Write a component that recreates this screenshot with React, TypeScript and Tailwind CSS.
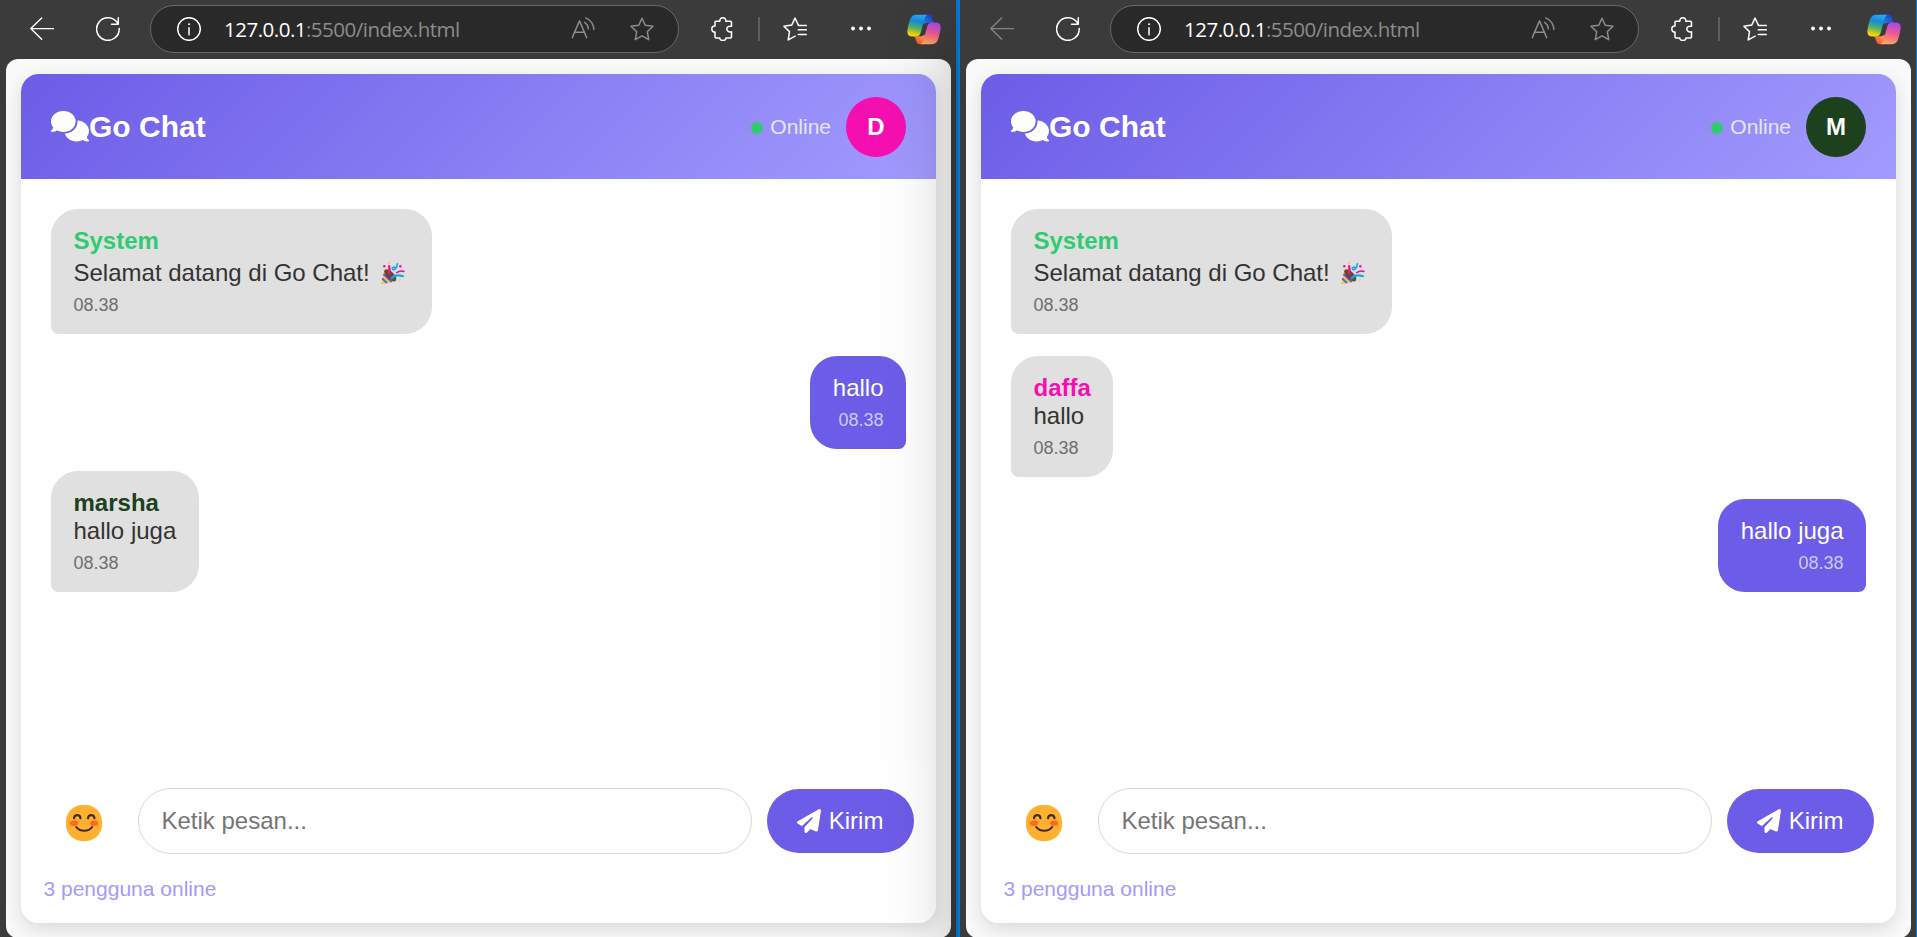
import { useId } from "react";
import { FaPaperPlane } from "react-icons/fa6";

type Message = {
  author?: string;
  authorClass?: string;
  text: string;
  time: string;
  own?: boolean;
  party?: boolean;
};

const line = {
  fill: "none",
  stroke: "currentColor",
  strokeWidth: 1.5,
  strokeLinecap: "round",
  strokeLinejoin: "round",
} as const;

function BackIcon({ className }: { className: string }) {
  return (
    <svg viewBox="0 0 24 24" className={className} {...line} strokeWidth={1.4}>
      <path d="M.8 11.6H23.5M11.7 1 .8 11.6l10.9 10.6" />
    </svg>
  );
}

function RefreshIcon() {
  return (
    <svg viewBox="0 0 24 24" className="h-6 w-6 shrink-0 text-white" {...line}>
      <path d="M23.2 11.4A11.3 11.3 0 1 1 21.9 6.7M22.3.8v6.4h-6.8" />
    </svg>
  );
}

function InfoIcon() {
  return (
    <svg viewBox="0 0 24 24" className="h-6 w-6 shrink-0 text-white" {...line}>
      <circle cx="12" cy="12" r="11.3" />
      <path d="M12 10.8v7" />
      <circle cx="12" cy="7.2" r=".6" fill="currentColor" strokeWidth={0.8} />
    </svg>
  );
}

function ReadAloudIcon() {
  return (
    <svg viewBox="0 0 24 24" className="h-6 w-6 shrink-0 text-[#8c8c8c]" {...line}>
      <path d="M1.3 20.6 8.500 3.900l7.200 16.700M3.600 15.300h9.800M13.700 5.300c2.200 1.500 3.500 3.900 3.700 6.700M14.900.9c4.700 2.200 7.700 6.600 8 11.600" />
    </svg>
  );
}

function StarIcon() {
  return (
    <svg viewBox="0 0 24 24" className="h-6 w-6 shrink-0 text-[#8c8c8c]" {...line}>
      <path d="m12 1.300 3.200 7 7.800 1-5.700 5.400 1.400 8L12 18.900l-6.700 3.800 1.400-8L1 9.300l7.800-1z" />
    </svg>
  );
}

function PuzzleIcon() {
  return (
    <svg viewBox="0 0 24 24" className="h-6 w-6 shrink-0 text-white" {...line}>
      <path d="M5 4.200h3.800C8.700 1.900 9.900.8 11.800.8s3.200 1.100 3 3.400h4.600a1.100 1.100 0 0 1 1.100 1.100v4C18 8.700 15.800 9.800 15.800 12s2.200 3.400 4.700 2.700V20a1 1 0 0 1-1 1h-4.600c.1 1.600-1.200 2.400-3.100 2.400S8.600 22.500 8.800 21H5a1 1 0 0 1-1-1v-4.900C2 15.300.8 14 .8 12S2 8.700 4 8.900V5.200a1 1 0 0 1 1-1z" />
    </svg>
  );
}

function FavoritesIcon() {
  return (
    <svg viewBox="0 0 24 24" className="h-6 w-6 shrink-0 text-white" {...line}>
      <path d="M23.300 8.400h-7.800L12 1.100 8.800 8 .9 9.200l5.600 5.400-1.300 8.300 7-3.700M15.300 12.800h8M15.300 17.500h8" />
    </svg>
  );
}

function DotsIcon() {
  return (
    <svg viewBox="0 0 24 24" className="h-6 w-6 shrink-0" fill="#fff">
      <circle cx="4" cy="11.500" r="1.900" />
      <circle cx="12" cy="11.500" r="1.900" />
      <circle cx="20" cy="11.500" r="1.900" />
    </svg>
  );
}

function CopilotIcon() {
  const id = useId();
  const ribbon =
    "M10 .5H20.500C18.600 1 17.700 4 16.900 7L13.800 18C13 21 11.500 22.200 9 22.200H5C1.200 22.200-.2 19.500.5 15.500C1 12 2 8 3.200 4.800C4.400 1.800 6.500.5 10 .5z";
  const fold =
    "M19.500.500h1.800c2 0 3 1.100 3.600 3.100l.6 2.200c.4 1.500 1 2.300 2 2.700H22c-3 0-4.800.6-6 2L17 5.500C17.800 2 18.300.500 19.500.500z";
  return (
    <svg viewBox="0 0 34 30.400" className="h-[31px] w-[34px] shrink-0">
      <defs>
        <linearGradient id={id + "a"} x1="0.600" y1="0" x2="0.400" y2="1">
          <stop offset="0" stopColor="#22aef0" />
          <stop offset=".3" stopColor="#1b84dd" />
          <stop offset=".62" stopColor="#4fb46a" />
          <stop offset=".95" stopColor="#fbd400" />
        </linearGradient>
        <linearGradient id={id + "b"} x1="1" y1="0" x2="0" y2="1">
          <stop offset="0" stopColor="#0b3bc0" />
          <stop offset="1" stopColor="#2c83ee" />
        </linearGradient>
        <linearGradient id={id + "c"} x1="0.400" y1="1" x2="0.600" y2="0">
          <stop offset="0" stopColor="#a24be8" />
          <stop offset=".5" stopColor="#ef5a92" />
          <stop offset="1" stopColor="#ffa65c" />
        </linearGradient>
        <linearGradient id={id + "d"} x1="0" y1="1" x2="1" y2="0">
          <stop offset="0" stopColor="#ffb04d" />
          <stop offset="1" stopColor="#e83f2c" />
        </linearGradient>
      </defs>
      <path d={fold} fill={`url(#${id}b)`} />
      <g transform="rotate(180 17 15.200)">
        <path d={fold} fill={`url(#${id}d)`} />
      </g>
      <path d={ribbon} fill={`url(#${id}a)`} />
      <g transform="rotate(180 17 15.200)">
        <path d={ribbon} fill={`url(#${id}c)`} />
      </g>
    </svg>
  );
}

function CommentsIcon() {
  return (
    <svg viewBox="0 0 640 512" className="h-[30.500px] w-[38px] shrink-0" fill="currentColor">
      <path d="M208 352c114.900 0 208-78.800 208-176S322.900 0 208 0S0 78.800 0 176c0 38.600 14.700 74.300 39.600 103.400c-3.500 9.400-8.700 17.700-14.200 24.700c-4.800 6.200-9.700 11-13.300 14.300c-1.800 1.600-3.300 2.900-4.300 3.700c-.5 .4-.9 .7-1.100 .8l-.2 .2C1 327.200-1.400 334.400 .8 340.900S9.100 352 16 352c21.800 0 43.800-5.600 62.100-12.500c9.200-3.500 17.800-7.400 25.200-11.400C134.100 343.300 169.800 352 208 352zM448 176c0 112.300-99.100 196.900-216.500 207C255.800 457.400 336.400 512 432 512c38.200 0 73.900-8.700 104.700-23.900c7.500 4 16 7.900 25.200 11.400c18.300 6.900 40.300 12.500 62.100 12.500c6.900 0 13.100-4.500 15.200-11.100c2.100-6.600-.2-13.800-5.800-17.900l-.2-.2c-.2-.2-.6-.4-1.100-.8c-1-.8-2.500-2-4.300-3.700c-3.600-3.300-8.500-8.100-13.300-14.300c-5.500-7-10.700-15.400-14.200-24.700c24.900-29 39.600-64.700 39.600-103.400c0-92.800-84.900-168.900-192.600-175.500c.4 5.100 .6 10.300 .6 15.500z" />
    </svg>
  );
}

function PartyIcon() {
  return (
    <svg viewBox="0 0 24 23" className="h-[23px] w-6" fill="none" strokeLinecap="round">
      <path d="M3.500 8 0 22.500 15 19z" fill="#ffc248" />
      <path d="m2.400 12 8.400 8M1.300 16.500l4.700 4.600" stroke="#5565e0" strokeWidth="1.900" strokeLinecap="butt" />
      <ellipse cx="9.300" cy="13.300" rx="3.700" ry="7.800" transform="rotate(-45 9.300 13.300)" fill="#6d4534" />
      <path d="M7.300 12.500C9.200 9.500 8.700 6.200 7.900 3.300" stroke="#f5118c" strokeWidth="2.300" strokeLinecap="butt" />
      <path d="M10.500 16.300c2.500-3.300 6.500-3.600 11.500-2.100" stroke="#12a5ee" strokeWidth="2.100" />
      <path d="M16.400 1.500c-.4 4.500-3 7.300-4.600 5.800s1.300-3.200 2.400-1.400" stroke="#12a5ee" strokeWidth="1.600" />
      <path d="M15.800 10.600c2-1.500 4.600-1.800 7-1.200" stroke="#f5118c" strokeWidth="1.800" />
      <circle cx="3.300" cy="4.300" r="1.200" fill="#f5118c" />
      <circle cx="19.300" cy="4.300" r="1.200" fill="#f5118c" />
      <circle cx="8" cy=".9" r=".9" fill="#ffc248" />
      <circle cx="18.800" cy="18" r=".9" fill="#ffc248" />
    </svg>
  );
}

function SmileIcon() {
  return (
    <svg viewBox="0 0 36 36" className="h-9 w-9" fill="none" strokeLinecap="round">
      <rect width="36" height="36" rx="16.500" fill="#ffb02e" />
      <ellipse cx="8" cy="18.200" rx="4" ry="2.700" fill="#ff6723" />
      <ellipse cx="28.200" cy="18.200" rx="4" ry="2.700" fill="#ff6723" />
      <path d="M8 13.300c.5-4.200 6-4.200 6.500 0M22 13.300c.5-4.200 6-4.200 6.500 0M10.300 22c3.500 5 12.300 5 15.800 0" stroke="#402a32" strokeWidth="2.100" />
    </svg>
  );
}

function Toolbar({ canGoBack }: { canGoBack: boolean }) {
  return (
    <div className="flex h-[59px] shrink-0 items-start pl-[30px]">
      <div className="flex h-[58px] items-center">
        <BackIcon className={canGoBack ? "h-6 w-6 shrink-0 text-white" : "h-6 w-6 shrink-0 text-[#858585]"} />
        <div className="ml-[42px] flex">
          <RefreshIcon />
        </div>
        <div className="ml-[30px] flex h-12 w-[529px] items-center rounded-full border-[1.500px] border-[#686868] bg-[#292929] pl-[26px] pr-6">
          <InfoIcon />
          <div className="ml-[23px] flex-1 whitespace-nowrap font-['Open_Sans','Noto_Sans',sans-serif] text-[20.500px] leading-7 tracking-[-0.500px] text-[#8c8c8c]">
            <span className="text-white">127.0.0.1</span>:5500/index.html
          </div>
          <ReadAloudIcon />
          <div className="ml-[35px] flex">
            <StarIcon />
          </div>
        </div>
        <div className="ml-8 flex">
          <PuzzleIcon />
        </div>
        <div className="ml-[23px] h-6 w-[2px] bg-[#5e5e5e]" />
        <div className="ml-[23px] flex">
          <FavoritesIcon />
        </div>
        <div className="ml-[42px] flex">
          <DotsIcon />
        </div>
        <div className="ml-[34px] flex">
          <CopilotIcon />
        </div>
      </div>
    </div>
  );
}

function Bubble({ m }: { m: Message }) {
  return (
    <div
      className={
        m.own
          ? "self-end rounded-[27px] rounded-br-[7.500px] bg-[#6c5ce7] px-[22.500px] py-[18px] text-right text-white"
          : "self-start rounded-[27px] rounded-bl-[7.500px] bg-[#e0e0e0] px-[22.500px] py-[18px] text-[#333333]"
      }
    >
      {m.author && <div className={`text-2xl leading-7 font-bold ${m.authorClass}`}>{m.author}</div>}
      {m.party ? (
        <div className="flex h-8 items-end text-2xl leading-7">
          <span>{m.text}</span>
          <span className="mr-[5px] mb-[2px] ml-[11px]">
            <PartyIcon />
          </span>
        </div>
      ) : (
        <div className="text-2xl leading-7">{m.text}</div>
      )}
      <div className={m.own ? "mt-[7px] text-lg leading-[22px] text-[#cec9f7]" : "mt-[7px] text-lg leading-[22px] text-[#6e6e6e]"}>
        {m.time}
      </div>
    </div>
  );
}

function Chat({ initial, avatarClass, messages }: { initial: string; avatarClass: string; messages: Message[] }) {
  return (
    <div className="mx-auto h-[879px] w-[945px] shrink-0 overflow-hidden rounded-xl bg-[#f9f9f9] p-[15px] font-['Liberation_Sans',Arial,sans-serif]">
      <div className="flex h-[849px] flex-col overflow-hidden rounded-[18px] bg-white shadow-[0_6px_18px_rgba(0,0,0,0.13)]">
        <header className="flex h-[105px] shrink-0 items-center bg-[linear-gradient(135deg,#6c5ce7,#a29bfe)] px-[30px] text-white">
          <CommentsIcon />
          <h1 className="text-[30px] leading-9 font-bold">Go Chat</h1>
          <div className="ml-auto flex items-center">
            <span className="mt-[2px] h-3 w-3 rounded-full bg-[#2ecc71]" />
            <span className="ml-[7.500px] text-[21px] leading-6 text-[#e6e5ee]">Online</span>
            <span className={`ml-[15px] flex h-[60px] w-[60px] items-center justify-center rounded-full text-2xl font-bold ${avatarClass}`}>
              {initial}
            </span>
          </div>
        </header>
        <main className="flex flex-1 flex-col gap-[22px] bg-[#fefefe] p-[30px]">
          {messages.map((m, i) => (
            <Bubble key={i} m={m} />
          ))}
        </main>
        <footer className="h-[158px] shrink-0 bg-white px-[22.500px] pt-[23px]">
          <div className="flex h-[66px] items-center">
            <span className="mt-[3px] ml-[22px]">
              <SmileIcon />
            </span>
            <input
              placeholder="Ketik pesan..."
              className="ml-[36.500px] h-[66px] w-[614px] rounded-full border border-[#d8d8d8] bg-white px-[22.500px] text-2xl placeholder-[#757575] outline-none"
            />
            <button className="ml-[15px] flex h-16 w-[147px] items-center justify-center gap-2 rounded-full bg-[#6c5ce7] text-2xl text-white">
              <FaPaperPlane className="h-6 w-6" />
              Kirim
            </button>
          </div>
          <p className="mt-[23px] text-[21px] leading-6 text-[#a29bfe]">3 pengguna online</p>
        </footer>
      </div>
    </div>
  );
}

const welcome: Message = {
  author: "System",
  authorClass: "text-[#2ecc71]",
  text: "Selamat datang di Go Chat!",
  time: "08.38",
  party: true,
};

export default function App() {
  return (
    <div className="flex h-[937px] w-[1917px] overflow-hidden bg-[#3b3b3b]">
      <section className="flex w-[958px] shrink-0 flex-col border-r-2 border-[#0078d4] bg-[#3b3b3b]">
        <Toolbar canGoBack />
        <div className="w-[957px]">
          <Chat
            initial="D"
            avatarClass="bg-[#f50fb0]"
            messages={[
              welcome,
              { text: "hallo", time: "08.38", own: true },
              { author: "marsha", authorClass: "text-[#1c411c]", text: "hallo juga", time: "08.38" },
            ]}
          />
        </div>
      </section>
      <section className="relative z-10 flex w-[959px] shrink-0 flex-col border-r border-l-2 border-[#0078d4] bg-[#3b3b3b] shadow-[0_32px_64px_rgba(0,0,0,0.28)]">
        <Toolbar canGoBack={false} />
        <div className="w-[957px]">
          <Chat
            initial="M"
            avatarClass="bg-[#1c411c]"
            messages={[
              welcome,
              { author: "daffa", authorClass: "text-[#f50fb0]", text: "hallo", time: "08.38" },
              { text: "hallo juga", time: "08.38", own: true },
            ]}
          />
        </div>
      </section>
    </div>
  );
}
